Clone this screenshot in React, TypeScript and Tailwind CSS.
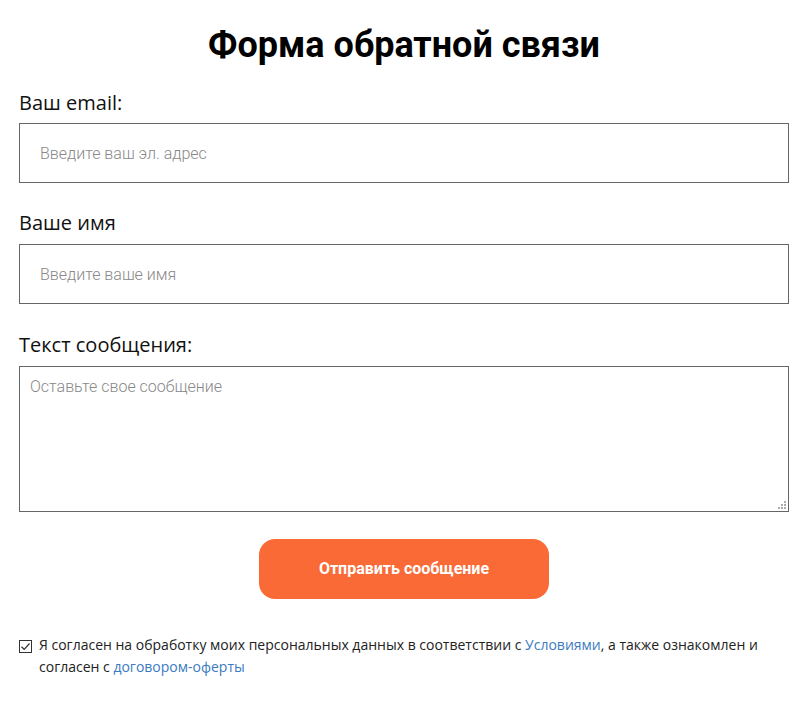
import { useState } from 'react'

export default function App() {
  const [agree, setAgree] = useState(true)

  return (
    <div className="min-h-[714px] bg-white px-[19px] pt-[18px] font-['Open_Sans',sans-serif]">
      <div className="w-[770px]">
        <h1 className="text-center font-['Roboto',sans-serif] text-[36px] font-bold leading-normal text-black">
          Форма обратной связи
        </h1>

        <form className="mt-[17px] flex flex-col" onSubmit={(e) => e.preventDefault()}>
          {/* Email */}
          <label className="mb-[6px] block text-[20px] leading-[28px] text-[#111]">Ваш email:</label>
          <input
            type="email"
            placeholder="Введите ваш эл. адрес"
            className="h-[60px] w-full border border-[#666] px-[20px] font-['Roboto',sans-serif] text-[16px] font-light text-[#333] outline-none placeholder:text-[#888]"
          />

          {/* Name */}
          <label className="mb-[7px] mt-[26px] block text-[20px] leading-[28px] text-[#111]">Ваше имя</label>
          <input
            type="text"
            placeholder="Введите ваше имя"
            className="h-[60px] w-full border border-[#666] px-[20px] font-['Roboto',sans-serif] text-[16px] font-light text-[#333] outline-none placeholder:text-[#888]"
          />

          {/* Message */}
          <label className="mb-[7px] mt-[27px] block text-[20px] leading-[28px] text-[#111]">Текст сообщения:</label>
          <div className="relative">
            <textarea
              placeholder="Оставьте свое сообщение"
              className="block h-[146px] w-full resize-none border border-[#666] p-[10px] font-['Roboto',sans-serif] text-[16px] font-light leading-[20px] text-[#333] outline-none placeholder:text-[#888]"
            />
            <svg className="pointer-events-none absolute bottom-[3px] right-[3px]" width="8" height="8" viewBox="0 0 8 8">
              <rect x="6" y="0" width="2" height="2" fill="#aaa" />
              <rect x="3" y="3" width="2" height="2" fill="#aaa" />
              <rect x="6" y="3" width="2" height="2" fill="#aaa" />
              <rect x="0" y="6" width="2" height="2" fill="#aaa" />
              <rect x="3" y="6" width="2" height="2" fill="#aaa" />
              <rect x="6" y="6" width="2" height="2" fill="#aaa" />
            </svg>
          </div>

          <button
            type="submit"
            className="mx-auto mt-[27px] h-[60px] w-[290px] rounded-[16px] bg-[#f96a36] font-['Roboto',sans-serif] text-[16px] font-bold text-white"
          >
            Отправить сообщение
          </button>

          {/* Agreement */}
          <div className="mt-[35px] flex items-start text-[14px] leading-[22px] text-[#222]">
            <button
              type="button"
              onClick={() => setAgree((v) => !v)}
              className="mt-[6px] flex h-[13px] w-[13px] shrink-0 items-center justify-center border border-[#333] bg-white"
              aria-label="Согласие"
            >
              {agree && (
                <svg width="11" height="11" viewBox="0 0 11 11" fill="none">
                  <path d="M1.5 5.8 L4.2 8.3 L9.5 2.5" stroke="#333" strokeWidth="1.2" />
                </svg>
              )}
            </button>
            <p className="ml-[7px]">
              Я согласен на обработку моих персональных данных в соответствии с{' '}
              <a href="#" className="text-[#3b7bbf]">Условиями</a>, а также ознакомлен и согласен с{' '}
              <a href="#" className="text-[#3b7bbf]">договором-оферты</a>
            </p>
          </div>
        </form>
      </div>
    </div>
  )
}
